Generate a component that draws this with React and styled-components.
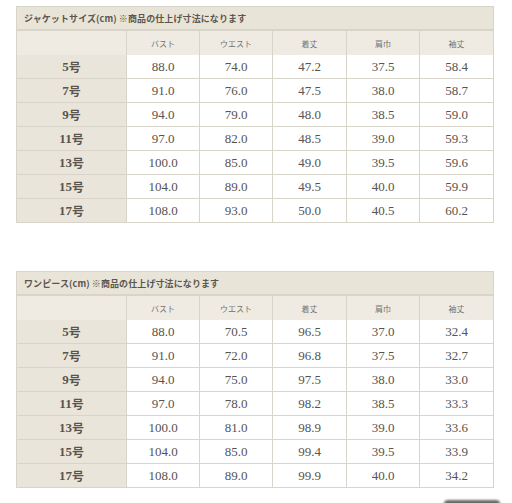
import React from 'react';
import styled, { createGlobalStyle } from 'styled-components';

const GlobalStyle = createGlobalStyle`
  body {
    margin: 0;
    background: #ffffff;
    font-family: "Liberation Serif", "Noto Sans CJK JP", serif;
  }
`;

const Page = styled.div`
  position: relative;
  width: 512px;
  height: 503px;
  overflow: hidden;
  padding: 6px 18px 0 16px;
  box-sizing: border-box;
  display: flex;
  flex-direction: column;
  gap: 48px;
`;

const Table = styled.div`
  display: grid;
  grid-template-columns: 109px 72px 72px 73px 72px 73px;
  grid-auto-rows: 23px;
  gap: 1px;
  width: 478px;
  box-sizing: border-box;
  border: 1px solid #d9d4c9;
  background: #d9d4c9;
`;

const Title = styled.div`
  grid-column: 1 / -1;
  height: 22px;
  background: #e9e4d8;
  display: flex;
  align-items: center;
  padding-left: 7px;
  font-family: "Noto Sans CJK JP", sans-serif;
  font-weight: 700;
  font-size: 9px;
  color: #5a564e;
  letter-spacing: 0.1px;
`;

const Head = styled.div`
  height: 24px;
  background: #efebe3;
  display: flex;
  align-items: center;
  justify-content: center;
  font-family: "Noto Sans CJK JP", sans-serif;
  font-size: 8px;
  color: #75716b;
`;

const Label = styled.div`
  background: #eae5da;
  display: flex;
  align-items: center;
  justify-content: center;
  font-weight: 700;
  font-size: 12px;
  color: #59554e;
`;

const Num = styled.span`
  font-family: "Liberation Serif", serif;
  font-size: 13px;
`;

const Go = styled.span`
  font-family: "Noto Sans CJK JP", sans-serif;
  font-size: 12px;
`;

const Cell = styled.div`
  background: #ffffff;
  display: flex;
  align-items: center;
  justify-content: center;
  font-size: 13px;
  color: #57534f;
`;

const Shadow = styled.div`
  position: absolute;
  left: 444px;
  top: 500px;
  width: 56px;
  height: 10px;
  border-radius: 4px;
  background: #6a6a6a;
  filter: blur(1px);
`;

const headers = ['バスト', 'ウエスト', '着丈', '肩巾', '袖丈'];

const jacket = [
  ['5', '88.0', '74.0', '47.2', '37.5', '58.4'],
  ['7', '91.0', '76.0', '47.5', '38.0', '58.7'],
  ['9', '94.0', '79.0', '48.0', '38.5', '59.0'],
  ['11', '97.0', '82.0', '48.5', '39.0', '59.3'],
  ['13', '100.0', '85.0', '49.0', '39.5', '59.6'],
  ['15', '104.0', '89.0', '49.5', '40.0', '59.9'],
  ['17', '108.0', '93.0', '50.0', '40.5', '60.2'],
];

const onepiece = [
  ['5', '88.0', '70.5', '96.5', '37.0', '32.4'],
  ['7', '91.0', '72.0', '96.8', '37.5', '32.7'],
  ['9', '94.0', '75.0', '97.5', '38.0', '33.0'],
  ['11', '97.0', '78.0', '98.2', '38.5', '33.3'],
  ['13', '100.0', '81.0', '98.9', '39.0', '33.6'],
  ['15', '104.0', '85.0', '99.4', '39.5', '33.9'],
  ['17', '108.0', '89.0', '99.9', '40.0', '34.2'],
];

function SizeTable({ title, rows }) {
  return (
    <Table>
      <Title>{title}</Title>
      <Head />
      {headers.map((h) => (
        <Head key={h}>{h}</Head>
      ))}
      {rows.map((r) => (
        <React.Fragment key={r[0]}>
          <Label>
            <Num>{r[0]}</Num>
            <Go>号</Go>
          </Label>
          {r.slice(1).map((v, i) => (
            <Cell key={i}>{v}</Cell>
          ))}
        </React.Fragment>
      ))}
    </Table>
  );
}

export default function App() {
  return (
    <>
      <GlobalStyle />
      <Page>
        <SizeTable title="ジャケットサイズ(cm) ※商品の仕上げ寸法になります" rows={jacket} />
        <SizeTable title="ワンピース(cm) ※商品の仕上げ寸法になります" rows={onepiece} />
        <Shadow />
      </Page>
    </>
  );
}
